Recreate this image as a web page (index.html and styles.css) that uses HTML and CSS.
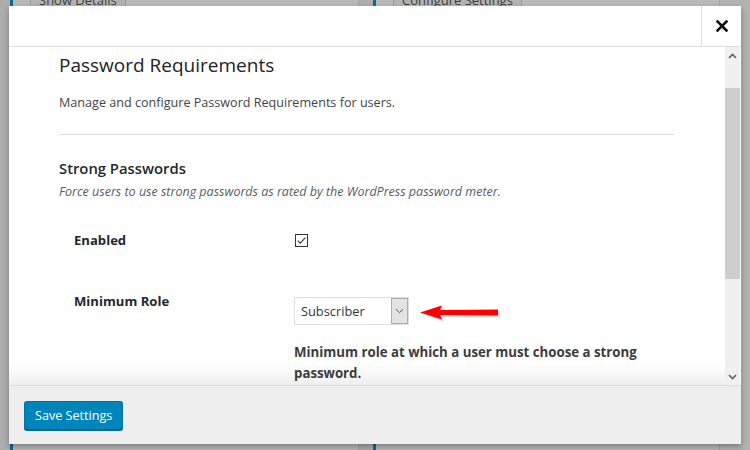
FILE: index.html
```html
<!DOCTYPE html>
<html lang="en">
<head>
<meta charset="utf-8">
<title>Password Requirements</title>
<link rel="stylesheet" href="styles.css">
</head>
<body>
<div class="page">
  <div class="card">
    <span class="bg-btn">Show Details</span>
  </div>
  <div class="card">
    <span class="bg-btn">Configure Settings</span>
  </div>
  <div class="page-gutter"></div>
</div>

<div class="modal">
  <header class="modal-head">
    <div class="head-spacer"></div>
    <button class="close" type="button" aria-label="Close">
      <svg width="12" height="12" viewBox="0 0 12 12"><path d="M1.5 1.5 L10.5 10.5 M10.5 1.5 L1.5 10.5" stroke="#111" stroke-width="2.6" stroke-linecap="square" fill="none"/></svg>
    </button>
  </header>
  <div class="modal-body">
    <div class="content">
      <h2 class="title">Password Requirements</h2>
      <p class="intro">Manage and configure Password Requirements for users.</p>
      <hr class="rule">
      <h3 class="section">Strong Passwords</h3>
      <p class="section-desc">Force users to use strong passwords as rated by the WordPress password meter.</p>
      <div class="form-row">
        <div class="label">Enabled</div>
        <div class="field">
          <span class="checkbox">
            <svg width="11" height="11" viewBox="0 0 11 11"><path d="M1.8 5.6 L4.3 8.1 L9.4 2.6" stroke="#3a3a3a" stroke-width="1.2" fill="none"/></svg>
          </span>
        </div>
      </div>
      <div class="form-row role-row">
        <div class="label">Minimum Role</div>
        <div class="field">
          <div class="select-line">
            <div class="select">
              <span class="select-value">Subscriber</span>
              <span class="select-btn">
                <svg width="9" height="6" viewBox="0 0 9 6"><path d="M1 1.2 L4.5 4.6 L8 1.2" stroke="#555" stroke-width="1" fill="none"/></svg>
              </span>
            </div>
            <svg class="pointer" width="82" height="20" viewBox="0 0 82 20">
              <path d="M2 9 L24 2 L22 7 L80 6.5 L80 13.5 L22 13 L24 18 Z" fill="#b8b8b8" opacity="0.35" transform="translate(1.5,1.5)"/>
              <path d="M1 9.5 L23 2.5 L21 7 L79 6.5 L79 12.5 L21 12 L23 16.5 Z" fill="#ff0000"/>
            </svg>
          </div>
          <p class="field-desc">Minimum role at which a user must choose a strong password.</p>
        </div>
      </div>
    </div>
    <div class="scrollbar">
      <div class="sb-btn">
        <svg width="9" height="6" viewBox="0 0 9 6"><path d="M1 5 L4.5 1.5 L8 5" stroke="#606060" stroke-width="1.6" fill="none"/></svg>
      </div>
      <div class="sb-track"><div class="sb-thumb"></div></div>
      <div class="sb-btn">
        <svg width="9" height="6" viewBox="0 0 9 6"><path d="M1 1 L4.5 4.5 L8 1" stroke="#606060" stroke-width="1.6" fill="none"/></svg>
      </div>
    </div>
  </div>
  <footer class="modal-foot">
    <button class="save" type="button">Save Settings</button>
  </footer>
</div>
</body>
</html>
```

FILE: styles.css
```css
html, body {
  margin: 0;
  padding: 0;
}

body {
  width: 750px;
  height: 450px;
  overflow: hidden;
  background: #adadad;
  font-family: "Open Sans", "Noto Sans", "DejaVu Sans", sans-serif;
  color: #23282d;
}

/* ---------- dimmed page behind the modal ---------- */
.page {
  display: grid;
  grid-template-columns: 349px 347px 30px;
  column-gap: 14px;
  padding-left: 10px;
  height: 450px;
}

.card {
  background: #b9b9b9;
  border-left: 3px solid #0c6a92;
  border-right: 1px solid #a2a2a2;
  padding-left: 17px;
  display: flex;
  flex-direction: column;
}

.bg-btn {
  align-self: flex-start;
  margin-top: -12px;
  height: 22px;
  line-height: 22px;
  padding: 0 8px;
  border: 1px solid #999;
  background: #b3b3b3;
  color: #3e3e3e;
  font-size: 13px;
}

.page-gutter {
  background: #b2b2b2;
  margin-left: -14px;
}

/* ---------- modal ---------- */
.modal {
  position: absolute;
  left: 9px;
  top: 6px;
  width: 732px;
  height: 438px;
  background: #fff;
  display: flex;
  flex-direction: column;
  box-shadow: 0 3px 6px rgba(0, 0, 0, 0.3);
}

.modal-head {
  display: flex;
  height: 40px;
  border-bottom: 1px solid #dddddd;
  flex: none;
}

.head-spacer {
  flex: 1;
}

.close {
  width: 40px;
  height: 40px;
  border: 0;
  border-left: 1px solid #dddddd;
  background: #fff;
  padding: 0;
  display: flex;
  align-items: center;
  justify-content: center;
}

.modal-body {
  flex: 1;
  display: flex;
  overflow: hidden;
}

.content {
  flex: 1;
  padding: 5px 51px 0 50px;
  overflow: hidden;
  background: linear-gradient(to bottom, #ffffff calc(100% - 22px), #efefef);
}

.title {
  margin: 0;
  font-size: 19px;
  line-height: 26px;
  font-weight: 400;
  color: #1e2226;
}

.intro {
  margin: 15px 0 0;
  font-size: 12.6px;
  line-height: 20px;
  color: #444;
}

.rule {
  margin: 21px 0 0;
  border: 0;
  border-top: 1px solid #dddddd;
  height: 0;
}

.section {
  margin: 23px 0 0;
  font-size: 14.8px;
  line-height: 20px;
  font-weight: 600;
  color: #23282d;
}

.section-desc {
  margin: 4px 0 0;
  font-size: 12.5px;
  line-height: 20px;
  font-style: italic;
  color: #555d66;
}

.form-row {
  display: grid;
  grid-template-columns: 235px 1fr;
  margin-top: 28px;
}

.role-row {
  margin-top: 41px;
}

.label {
  padding-left: 15px;
  font-size: 13.1px;
  line-height: 20px;
  font-weight: 700;
  color: #23282d;
}

.field {
  font-size: 13px;
}

.checkbox {
  margin-top: 4px;
  margin-left: 1px;
  width: 11px;
  height: 11px;
  border: 1px solid #333;
  display: flex;
  align-items: center;
  justify-content: center;
  background: #fff;
}

.select-line {
  display: flex;
  align-items: center;
  gap: 10px;
  margin-top: 6px;
}

.select {
  width: 113px;
  height: 26px;
  border: 1px solid #dddddd;
  display: flex;
  align-items: stretch;
  background: #fff;
}

.select-value {
  flex: 1;
  padding-left: 6px;
  font-size: 12.8px;
  line-height: 27px;
  color: #32373c;
}

.select-btn {
  width: 15px;
  background: #e3e3e3;
  border: 1px solid #adadad;
  display: flex;
  align-items: center;
  justify-content: center;
}

.pointer {
  margin-top: 4px;
}

.field-desc {
  margin: 17px 0 0;
  font-size: 13.25px;
  line-height: 21px;
  font-weight: 700;
  color: #3c3c3c;
}

/* ---------- fake scrollbar ---------- */
.scrollbar {
  width: 15px;
  margin-right: 1px;
  background: #f0f0f0;
  display: flex;
  flex-direction: column;
  flex: none;
}

.sb-btn {
  height: 17px;
  display: flex;
  align-items: center;
  justify-content: center;
}

.sb-track {
  flex: 1;
}

.sb-thumb {
  margin-top: 24px;
  height: 191px;
  background: #cdcdcd;
}

/* ---------- footer ---------- */
.modal-foot {
  flex: none;
  border-top: 1px solid #dddddd;
  background: #eeeeee;
  padding: 15px 0 0 15px;
  box-sizing: border-box;
  height: 59px;
}

.save {
  height: 29px;
  padding: 0 10px;
  border: 1px solid #0073aa;
  border-bottom-color: #006799;
  border-radius: 3px;
  background: #0085ba;
  box-shadow: 0 1px 0 #006799;
  color: #fff;
  font-family: "Open Sans", "Noto Sans", sans-serif;
  font-size: 12.6px;
  line-height: 26px;
}
```
